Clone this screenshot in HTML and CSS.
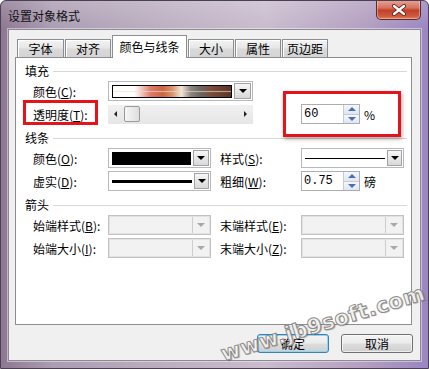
FILE: index.html
```html
<!DOCTYPE html>
<html>
<head lang="zh-CN">
    <meta charset="UTF-8">
    <title>设置对象格式</title>
    <link rel="stylesheet" href="styles.css">
</head>
<body>
<div class="window">
    <div class="titlebar">
        <span class="title">设置对象格式</span>
        <div class="close">
            <svg width="16" height="12" viewBox="0 0 16 12">
                <path d="M3 2 L13 10 M13 2 L3 10" stroke="#5a1a10" stroke-width="4" stroke-linecap="round"/>
                <path d="M3 2 L13 10 M13 2 L3 10" stroke="#fff" stroke-width="2.4" stroke-linecap="round"/>
            </svg>
        </div>
    </div>
    <div class="client">
        <div class="tabs">
            <div class="tab">字体</div>
            <div class="tab">对齐</div>
            <div class="tab selected">颜色与线条</div>
            <div class="tab">大小</div>
            <div class="tab">属性</div>
            <div class="tab">页边距</div>
        </div>
        <div class="panel">
            <div class="group"><span>填充</span><i></i></div>
            <div class="row">
                <label class="lbl">颜色(<u>C</u>):</label>
                <div class="combo wide">
                    <div class="val"><div class="swatch"></div></div>
                    <div class="drop"><b></b></div>
                </div>
            </div>
            <div class="row">
                <label class="lbl">透明度(<u>T</u>):</label>
                <div class="slider">
                    <span class="arr left"></span>
                    <span class="thumb"></span>
                    <span class="arr right"></span>
                </div>
                <div class="spin first">
                    <span class="num">60</span>
                    <div class="btns"><span class="up"></span><span class="down"></span></div>
                </div>
                <span class="unit">%</span>
            </div>

            <div class="group"><span>线条</span><i></i></div>
            <div class="row">
                <label class="lbl">颜色(<u>O</u>):</label>
                <div class="combo narrow">
                    <div class="val"><div class="black"></div></div>
                    <div class="drop"><b></b></div>
                </div>
                <label class="lbl2">样式(<u>S</u>):</label>
                <div class="combo narrow">
                    <div class="val"><div class="line thin"></div></div>
                    <div class="drop"><b></b></div>
                </div>
            </div>
            <div class="row">
                <label class="lbl">虚实(<u>D</u>):</label>
                <div class="combo narrow">
                    <div class="val"><div class="line thick"></div></div>
                    <div class="drop"><b></b></div>
                </div>
                <label class="lbl2">粗细(<u>W</u>):</label>
                <div class="spin">
                    <span class="num">0.75</span>
                    <div class="btns"><span class="up"></span><span class="down"></span></div>
                </div>
                <span class="unit">磅</span>
            </div>

            <div class="group"><span>箭头</span><i></i></div>
            <div class="row">
                <label class="lbl">始端样式(<u>B</u>):</label>
                <div class="combo narrow off">
                    <div class="val"></div>
                    <div class="drop"><b></b></div>
                </div>
                <label class="lbl2">末端样式(<u>E</u>):</label>
                <div class="combo narrow off">
                    <div class="val"></div>
                    <div class="drop"><b></b></div>
                </div>
            </div>
            <div class="row">
                <label class="lbl">始端大小(<u>I</u>):</label>
                <div class="combo narrow off">
                    <div class="val"></div>
                    <div class="drop"><b></b></div>
                </div>
                <label class="lbl2">末端大小(<u>Z</u>):</label>
                <div class="combo narrow off">
                    <div class="val"></div>
                    <div class="drop"><b></b></div>
                </div>
            </div>
        </div>
        <div class="buttons">
            <div class="btn default">确定</div>
            <div class="btn">取消</div>
        </div>
    </div>

    <div class="mark-box mark-left"></div>
    <div class="mark-box mark-right"></div>
    <div class="watermark">www.jb9soft.com</div>
</div>
</body>
</html>
```

FILE: styles.css
```css
*{
    padding: 0;
    margin: 0;
    box-sizing: border-box;
}
body{
    font-family: "Noto Sans CJK SC", "Liberation Sans", sans-serif;
    font-size: 12px;
    color: #000;
    background: #fff;
}
.window{
    position: relative;
    width: 429px;
    height: 369px;
    overflow: hidden;
    border: 1px solid #4b3f52;
    border-radius: 6px 6px 0 0;
    padding: 0 7px 7px 7px;
    background:
        linear-gradient(180deg, rgba(255,255,255,0.18), rgba(255,255,255,0) 28px),
        linear-gradient(90deg, #8d7792 0%, #ab9db2 12%, #bdb0c2 40%, #c9bccd 62%, #b39fc0 85%, #9a86c2 100%);
}
.titlebar{
    height: 28px;
    display: flex;
    align-items: flex-start;
}
.title{
    margin-top: 7px;
    line-height: 16px;
    color: #111;
}
.close{
    margin-left: auto;
    margin-top: -1px;
    width: 45px;
    height: 20px;
    border: 1px solid #5e2a24;
    border-top: none;
    border-radius: 0 0 5px 5px;
    background: linear-gradient(180deg, #e9a597 0%, #d77361 40%, #c2402a 55%, #cf5a3e 85%, #e07f5c 100%);
    box-shadow: inset 0 0 0 1px rgba(255,255,255,0.35);
    display: flex;
    align-items: center;
    justify-content: center;
}
.client{
    height: 332px;
    background: #f0f0f0;
    border: 1px solid #8e8794;
    box-shadow: 0 0 0 1px rgba(255,255,255,0.45);
    padding: 5px 8px 7px 6px;
}
.tabs{
    height: 23px;
    margin-bottom: -1px;
    display: flex;
    align-items: flex-end;
    gap: 1px;
    padding-left: 2px;
}
.tab{
    height: 18px;
    margin-bottom: 1px;
    border: 1px solid #8b8d91;
    border-bottom: none;
    background: linear-gradient(180deg, #f3f3f3 0%, #e7e7e7 45%, #d9d9d9 55%, #d4d4d4 100%);
    box-shadow: inset 1px 1px 0 #fff;
    line-height: 18px;
    text-align: center;
    width: 46px;
}
.tab:first-child{
    width: 47px;
}
.tab.selected{
    position: relative;
    z-index: 1;
    width: 75px;
    height: 23px;
    margin-bottom: 0;
    background: #fff;
    box-shadow: none;
    line-height: 21px;
}
.panel{
    height: 268px;
    background: #fff;
    border: 1px solid #8b8d91;
}
.group{
    height: 14px;
    margin-top: 7px;
    padding-left: 9px;
    padding-right: 4px;
    display: flex;
    align-items: center;
    line-height: 14px;
}
.group:first-child{
    margin-top: 6px;
}
.group i{
    flex: 1;
    height: 1px;
    margin-left: 4px;
    background: #d8d8d2;
}
.row{
    height: 20px;
    margin-top: 3px;
    padding-left: 17px;
    display: flex;
    align-items: center;
}
.lbl{
    width: 75px;
    white-space: nowrap;
}
.lbl2{
    width: 81px;
    margin-left: 9px;
    white-space: nowrap;
}
.combo{
    height: 20px;
    display: flex;
    border: 1px solid #b5b8bd;
    background: #fff;
    padding: 1px;
}
.combo.wide{
    width: 145px;
}
.combo.narrow{
    width: 103px;
}
.combo .val{
    flex: 1;
    display: flex;
    align-items: center;
    padding: 0 2px;
}
.combo .drop{
    width: 17px;
    border: 1px solid #a2a2a2;
    background: linear-gradient(180deg, #f6f6f6, #d8d8d8);
    display: flex;
    align-items: center;
    justify-content: center;
}
.combo .drop b{
    width: 0;
    height: 0;
    border-left: 4px solid transparent;
    border-right: 4px solid transparent;
    border-top: 4px solid #000;
}
.combo.off{
    background: #f2f2f2;
    border-color: #c2c2c2;
    box-shadow: inset 0 0 0 1px #e2e2e2;
}
.combo.off .drop{
    background: #f2f2f2;
    border: none;
    border-left: 1px solid #cdcdcd;
}
.combo.off .drop b{
    border-top-color: #a8a8a8;
}
.swatch{
    width: 100%;
    height: 13px;
    border: 1px solid #000;
    background:
        linear-gradient(180deg, rgba(255,255,255,0) 0%, rgba(255,255,255,0) 40%, rgba(240,220,200,0.6) 50%, rgba(255,255,255,0) 60%),
        linear-gradient(90deg, #fff 0%, #fff 18%, #f1c9c2 24%, #e07a68 32%, #c96540 42%, #d8926a 50%, #f0e6d8 58%, #8a8680 66%, #6c665f 74%, #7a4a38 84%, #5b3428 100%);
}
.black{
    width: 79px;
    height: 13px;
    background: #000;
}
.line{
    width: 80px;
    background: #000;
}
.line.thin{
    height: 1px;
}
.line.thick{
    height: 3px;
}
.slider{
    width: 145px;
    height: 19px;
    background: linear-gradient(180deg, #f0f0f0, #e6e6e6);
    display: flex;
    align-items: center;
    padding: 0 6px 0 6px;
}
.slider .arr{
    width: 0;
    height: 0;
    border-top: 3px solid transparent;
    border-bottom: 3px solid transparent;
}
.slider .arr.left{
    border-right: 3px solid #222;
}
.slider .arr.right{
    margin-left: auto;
    border-left: 3px solid #222;
}
.slider .thumb{
    width: 16px;
    height: 16px;
    margin-left: 7px;
    border: 1px solid #9a9a9a;
    border-radius: 2px;
    background: linear-gradient(90deg, #f6f6f6, #dedede);
}
.spin{
    width: 59px;
    height: 20px;
    margin: 0;
    border: 1px solid #abadb3;
    background: #fff;
    display: flex;
    align-items: center;
    padding-left: 2px;
}
.spin.first{
    margin-left: 48px;
}
.spin .num{
    flex: 1;
    font-family: "Liberation Mono", monospace;
    font-size: 12px;
}
.spin .btns{
    width: 16px;
    height: 18px;
    display: flex;
    flex-direction: column;
    border-left: 1px solid #c4cbd6;
}
.spin .btns span{
    flex: 1;
    background: linear-gradient(180deg, #f4f7fb, #dfe6f0);
    display: flex;
    align-items: center;
    justify-content: center;
}
.spin .btns span + span{
    border-top: 1px solid #c4cbd6;
}
.spin .up::before{
    content: "";
    border-left: 4px solid transparent;
    border-right: 4px solid transparent;
    border-bottom: 4px solid #4d6fb0;
}
.spin .down::before{
    content: "";
    border-left: 4px solid transparent;
    border-right: 4px solid transparent;
    border-top: 4px solid #4d6fb0;
}
.unit{
    margin-left: 4px;
}
.buttons{
    margin-top: 9px;
    margin-right: -1px;
    display: flex;
    justify-content: flex-end;
    gap: 12px;
}
.btn{
    width: 72px;
    height: 19px;
    border: 1px solid #707070;
    border-radius: 3px;
    background: linear-gradient(180deg, #f3f3f3 0%, #ebebeb 48%, #dddddd 52%, #cfcfcf 100%);
    box-shadow: inset 0 0 0 1px rgba(255,255,255,0.6);
    text-align: center;
    line-height: 17px;
}
.btn.default{
    border-color: #3c7fb1;
    box-shadow: inset 0 0 0 1px #8fd4f5;
}
.mark-box{
    position: absolute;
    border: 3px solid #e3151b;
}
.mark-left{
    left: 22px;
    top: 99px;
    width: 75px;
    height: 25px;
}
.mark-right{
    left: 282px;
    top: 90px;
    width: 118px;
    height: 46px;
    box-shadow: 1px 2px 4px rgba(0,0,0,0.35);
}
.watermark{
    position: absolute;
    left: 224px;
    top: 341px;
    font-family: "DejaVu Sans", sans-serif;
    font-weight: bold;
    font-size: 21px;
    letter-spacing: 0.5px;
    color: rgba(255,255,255,0.85);
    -webkit-text-stroke: 1px #8c8c8c;
    text-shadow: 1px 1px 1px rgba(0,0,0,0.35);
    transform: rotate(-17deg);
    transform-origin: left bottom;
    white-space: nowrap;
}
```
